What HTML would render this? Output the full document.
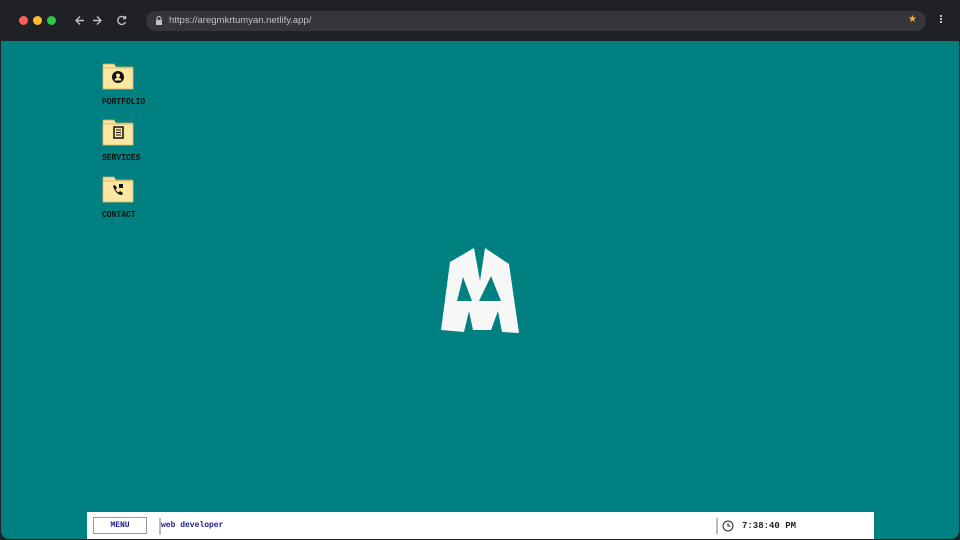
<!DOCTYPE html>
<html><head><style>
html,body{margin:0;padding:0;width:960px;height:540px;overflow:hidden;background:#202124;font-family:"Liberation Sans",sans-serif}
.top{position:absolute;left:0;top:0;width:960px;height:41px;background:#202124;border-radius:8px 8px 0 0}
.dot{position:absolute;top:16px;width:9px;height:9px;border-radius:50%}
.url{position:absolute;left:146px;top:11px;width:780px;height:20px;border-radius:10px;background:#35363a;color:#bdc1c6;font-size:9.5px;line-height:20px;text-indent:23px}
.main{position:absolute;left:1px;top:41px;width:958px;height:498px;background:#008080;border-radius:0 0 8px 8px;overflow:hidden}
.ic{position:absolute;left:100px;width:50px;text-align:left}
.ic span{position:absolute;top:36px;left:1px;font-family:"Liberation Mono",monospace;font-size:8px;font-weight:bold;color:#111;transform:scaleY(1.2);transform-origin:top left}
.task{position:absolute;left:86px;top:471px;width:787px;height:27px;background:#fff}
.mono{font-family:"Liberation Mono",monospace;font-weight:bold;font-size:8px}
</style></head><body>
<div class="top">
<div class="dot" style="left:19px;background:#ff5f57"></div>
<div class="dot" style="left:33px;background:#febc2e"></div>
<div class="dot" style="left:47px;background:#28c840"></div>
<svg style="position:absolute;left:74px;top:14px" width="60" height="13" viewBox="0 0 60 13" fill="none" stroke="#bdc1c6" stroke-width="1.4"><path d="M10 6.5H2M6 2.5L2 6.5L6 10.5"/><path d="M19 6.5H27M23 2.5L27 6.5L23 10.5"/><path d="M51 4A4 4 0 1 0 51.5 8"/><path d="M51.5 2V4.5H49" /></svg>
<div class="url">https://aregmkrtumyan.netlify.app/</div>
<svg style="position:absolute;left:155px;top:16px" width="8" height="9"><rect x="1" y="4" width="6" height="5" fill="#bdc1c6"/><path d="M2 4V2.5a2 2 0 0 1 4 0V4" stroke="#bdc1c6" fill="none"/></svg>
<div style="position:absolute;left:908px;top:14px;color:#f2b134;font-size:10px">★</div>
<div style="position:absolute;left:940px;top:15px;width:2px;height:2px;background:#bdc1c6;box-shadow:0 3px #bdc1c6,0 6px #bdc1c6"></div>
</div>
<div class="main">
<div class="ic" style="top:20px"><svg width="34" height="30"><path d="M2 3h11l2 3h17v22H2z" fill="#f6e29a" stroke="#c9b068" stroke-width="0.7"/><rect x="2" y="7" width="30" height="21" fill="#fbe7a2" stroke="#c9b068" stroke-width="0.7"/><circle cx="17" cy="16" r="6" fill="#111"/><circle cx="17" cy="14.5" r="2" fill="#fbe7a2"/><path d="M13.5 19.5a3.5 3 0 0 1 7 0" fill="#fbe7a2"/></svg><span>PORTFOLIO</span></div>
<div class="ic" style="top:76px"><svg width="34" height="30"><path d="M2 3h11l2 3h17v22H2z" fill="#f6e29a" stroke="#c9b068" stroke-width="0.7"/><rect x="2" y="7" width="30" height="21" fill="#fbe7a2" stroke="#c9b068" stroke-width="0.7"/><rect x="13" y="10" width="9" height="11" fill="none" stroke="#111" stroke-width="1.5"/><path d="M15 13h5M15 15.5h5M15 18h5" stroke="#111"/></svg><span>SERVICES</span></div>
<div class="ic" style="top:133px"><svg width="34" height="30"><path d="M2 3h11l2 3h17v22H2z" fill="#f6e29a" stroke="#c9b068" stroke-width="0.7"/><rect x="2" y="7" width="30" height="21" fill="#fbe7a2" stroke="#c9b068" stroke-width="0.7"/><path d="M12 12l2-1 2 3-1.5 1.5q1 2 3 3l1.5-1.5 3 2-1 2q-6 0-9-9z" fill="#111"/><rect x="18" y="10" width="4" height="4" fill="#111"/></svg><span>CONTACT</span></div>
<svg style="position:absolute;left:0;top:0" width="958" height="498"><path fill-rule="evenodd" fill="#f7f7f7" d="M449 221L473 207L479 240L484 207L508 223L518 292L501 291L497 270L490 289L472 289L468 270L463 291L440 289Z M462 236L456 260L471 260Z M490 235L478 260L500 260Z"/></svg>
<div class="task">
<div class="mono" style="position:absolute;left:6px;top:5px;width:54px;height:17px;border:1px solid #999;box-sizing:border-box;text-align:center;line-height:16px;color:#1a1a8c">MENU</div>
<div style="position:absolute;left:72px;top:6px;width:2px;height:17px;background:#bbb"></div>
<div class="mono" style="position:absolute;left:74px;top:9px;color:#1a1a8c">web developer</div>
<div style="position:absolute;left:629px;top:6px;width:2px;height:16px;background:#bbb"></div>
<svg style="position:absolute;left:635px;top:8px" width="12" height="12"><circle cx="6" cy="6" r="5" fill="none" stroke="#222"/><path d="M6 3v3h2.5" stroke="#222" fill="none"/></svg>
<div class="mono" style="position:absolute;left:655px;top:9px;font-size:9px;color:#222">7:38:40 PM</div>
</div>
</div>
</body></html>
